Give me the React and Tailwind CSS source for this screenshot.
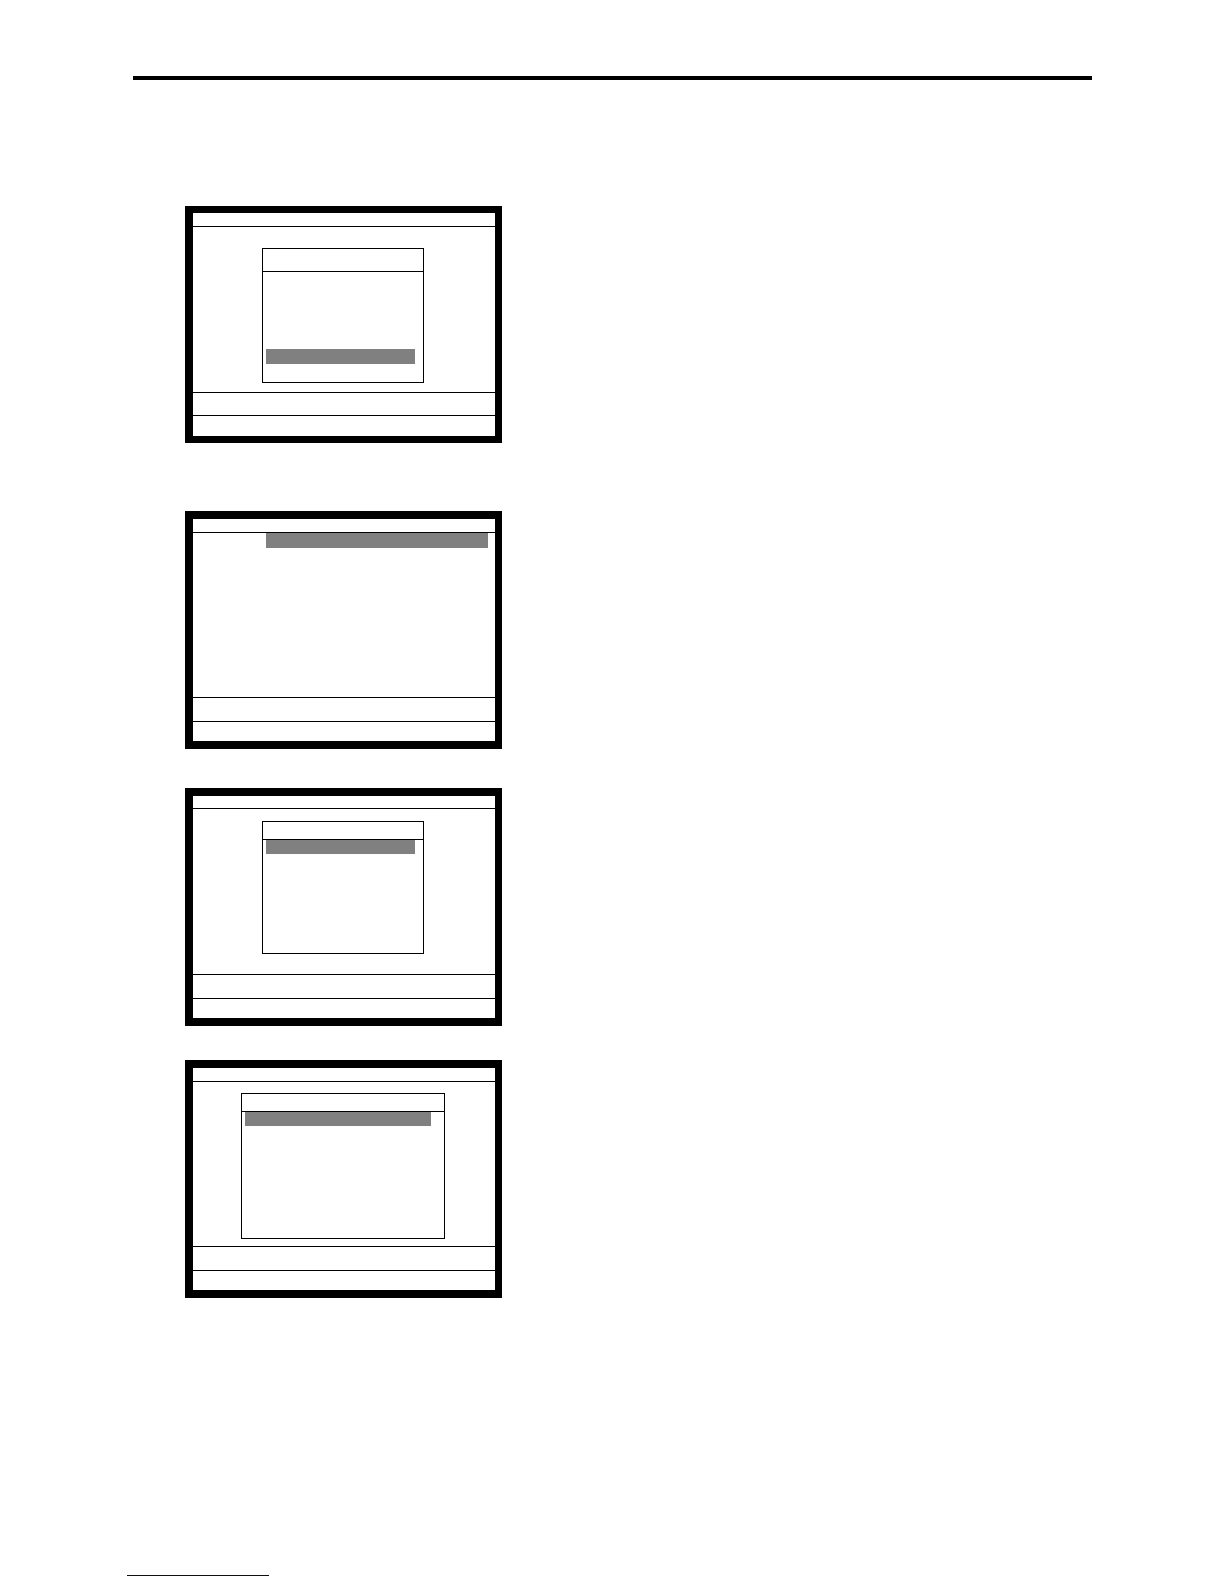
import clsx from 'clsx'

function Screen({ className, titleClass = 'h-[14px]', promptClass = 'h-6', statusClass = 'h-5', children }) {
  return (
    <section className={clsx('flex w-[317px] max-w-full flex-col border-x-8 border-r-[7px] border-black bg-white', className)}>
      <div className={clsx('border-b border-black', titleClass)} />
      <div className="flex-1 pr-[2px]">{children}</div>
      <div className={clsx('border-t border-black', promptClass)} />
      <div className={clsx('border-t border-black', statusClass)} />
    </section>
  )
}

function Dialog({ className, headerClass = 'h-[18px]', children }) {
  return (
    <div className={clsx('mx-auto border border-black', className)}>
      <div className={clsx('border-b border-black', headerClass)} />
      <div className="pr-2 pl-[3px]">{children}</div>
    </div>
  )
}

function Highlight({ className }) {
  return <div className={clsx('bg-[#808080]', className)} />
}

export default function App() {
  return (
    <div className="min-h-screen bg-white">
      <header className="mx-[133px] mr-[132px] pt-[76px]">
        <hr className="border-0 border-t-4 border-black" />
      </header>

      <main className="ml-[185px] pt-[126px]">
        <Screen
          className="h-[237px] border-y-[7px]"
          promptClass="h-[23px]"
          statusClass="h-[21px]"
        >
          <Dialog className="mt-[21px] h-[135px] w-[162px]" headerClass="h-[23px]">
            <Highlight className="mt-[77px] h-[15px]" />
          </Dialog>
        </Screen>

        <Screen className="mt-[68px] h-[238px] border-y-8">
          <Highlight className="mr-[5px] ml-[73px] h-[15px]" />
        </Screen>

        <Screen className="mt-[39px] h-[238px] border-y-8" titleClass="h-[13px]">
          <Dialog className="mt-3 h-[133px] w-[162px]" headerClass="h-[18px]">
            <Highlight className="h-[14px]" />
          </Dialog>
        </Screen>

        <Screen className="mt-[34px] h-[238px] border-y-8">
          <Dialog className="mt-[11px] h-[146px] w-[204px]">
            <Highlight className="mr-[5px] h-[14px]" />
          </Dialog>
        </Screen>
      </main>

      <footer className="ml-[127px] pt-[261px]">
        <a href="#top" aria-label="Home page" className="block h-[17px] w-[142px] border-b border-[#000080]" />
      </footer>
    </div>
  )
}
